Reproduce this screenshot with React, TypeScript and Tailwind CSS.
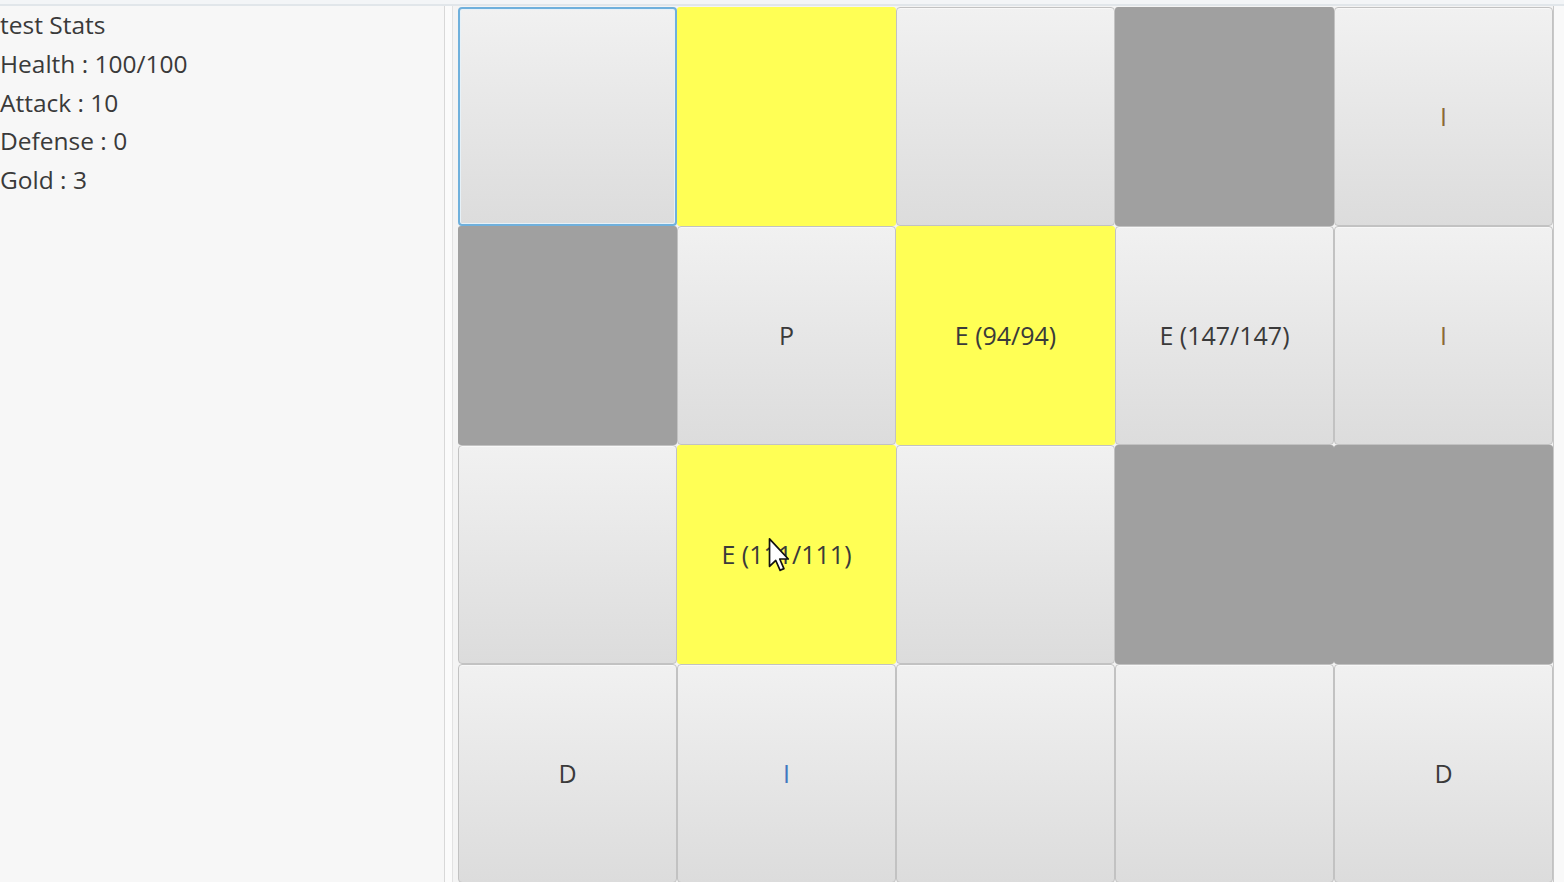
import React from 'react';

type Kind = 'btn' | 'focus' | 'yellow' | 'gray';

type Cell = { kind: Kind; label?: string; tone?: string };

const board: Cell[][] = [
  [
    { kind: 'focus' },
    { kind: 'yellow' },
    { kind: 'btn' },
    { kind: 'gray' },
    { kind: 'btn', label: 'I', tone: 'text-[#8a6a35]' },
  ],
  [
    { kind: 'gray' },
    { kind: 'btn', label: 'P' },
    { kind: 'yellow', label: 'E (94/94)' },
    { kind: 'btn', label: 'E (147/147)' },
    { kind: 'btn', label: 'I', tone: 'text-[#8a6a35]' },
  ],
  [
    { kind: 'btn' },
    { kind: 'yellow', label: 'E (111/111)' },
    { kind: 'btn' },
    { kind: 'gray' },
    { kind: 'gray' },
  ],
  [
    { kind: 'btn', label: 'D' },
    { kind: 'btn', label: 'I', tone: 'text-[#3f78bf]' },
    { kind: 'btn' },
    { kind: 'btn' },
    { kind: 'btn', label: 'D' },
  ],
];

const stats = ['test Stats', 'Health : 100/100', 'Attack : 10', 'Defense : 0', 'Gold : 3'];

function Tile({ cell }: { cell: Cell }) {
  const base = 'flex items-center justify-center w-[219px] h-[219px] text-[25px]';
  let look = '';
  if (cell.kind === 'btn') {
    look =
      'rounded-[4px] border border-[#c2c2c2] bg-linear-to-b from-[#f1f1f1] to-[#dcdcdc] shadow-[inset_0_1px_0_#f8f8f8]';
  } else if (cell.kind === 'focus') {
    look =
      'rounded-[4px] border-2 border-[#6fb0dc] bg-linear-to-b from-[#f1f1f1] to-[#dcdcdc] shadow-[inset_0_0_0_1px_#e6f1f8]';
  } else if (cell.kind === 'yellow') {
    look = 'rounded-[3px] bg-[#ffff55]';
  } else {
    look = 'rounded-[3px] bg-[#a0a0a0]';
  }
  return (
    <div className={`${base} ${look} ${cell.tone ?? 'text-[#3a3a3a]'}`}>
      {cell.label}
    </div>
  );
}

function Cursor() {
  return (
    <svg
      className="absolute left-[767px] top-[537px]"
      width="24"
      height="36"
      viewBox="0 0 12 19"
    >
      <path
        d="M1 1 L1 15.5 L4.3 12.4 L6.6 17.6 L8.6 16.7 L6.4 11.6 L10.9 11.6 Z"
        fill="#ffffff"
        stroke="#111111"
        strokeWidth="0.9"
        strokeLinejoin="round"
      />
    </svg>
  );
}

export default function App() {
  return (
    <div
      className="relative w-[1564px] h-[882px] overflow-hidden bg-[#f7f7f7] flex flex-col"
      style={{ fontFamily: '"Open Sans", "Noto Sans", sans-serif' }}
    >
      <div className="h-[6px] shrink-0 bg-[#f3f5f7] border-b-2 border-[#e1e6ea]" />
      <div className="flex flex-1">
        <div className="w-[445px] shrink-0 border-r border-[#d8d8d8]">
          {stats.map((s) => (
            <div key={s} className="text-[24.5px] leading-[38.8px] text-[#3a3a3a]">
              {s}
            </div>
          ))}
        </div>
        <div className="w-[8px] shrink-0 bg-[#fbfbfb] border-r border-[#e2e2e2]" />
        <div className="w-[5px] shrink-0 bg-[#f4f4f4]" />
        <div className="grid grid-cols-[repeat(5,219px)] grid-rows-[repeat(4,219px)] pt-[1px] bg-[#f4f4f4]">
          {board.flatMap((row, r) =>
            row.map((cell, c) => <Tile key={`${r}-${c}`} cell={cell} />)
          )}
        </div>
        <div className="flex-1 border-l border-[#c8c8c8] bg-[#f9f9f9]" />
      </div>
      <Cursor />
    </div>
  );
}
